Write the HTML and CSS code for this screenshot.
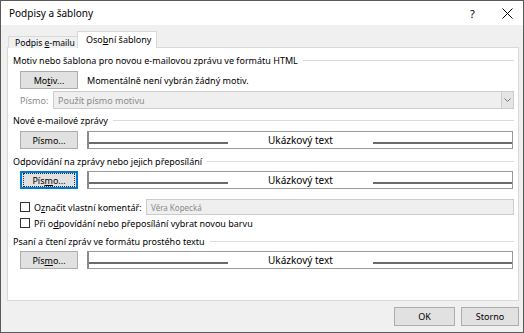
FILE: index.html
```html
<!DOCTYPE html>
<html lang="cs">
<head>
  <meta charset="UTF-8" />
  <title>Podpisy a šablony</title>
  <link rel="stylesheet" href="styles.css">
</head>
<body>

<div class="dialog">
  <div class="titlebar">
    <span class="title">Podpisy a šablony</span>
    <span class="help">?</span>
    <span class="close">
      <svg width="11" height="11" viewBox="0 0 11 11"><path d="M0.5 0.5 L10.5 10.5 M10.5 0.5 L0.5 10.5" stroke="#000" stroke-width="1" fill="none"/></svg>
    </span>
  </div>

  <div class="client">
    <div class="tabs">
      <div class="tab">Podpis <u>e</u>-mailu</div>
      <div class="tab selected">Oso<u>b</u>ní šablony</div>
    </div>

    <div class="panel">
      <!-- HTML motiv -->
      <div class="group-title g1"><span>Motiv nebo šablona pro novou e-mailovou zprávu ve formátu HTML</span></div>
      <div class="row theme-row">
        <button class="btn">Mo<u>t</u>iv...</button>
        <span class="note">Momentálně není vybrán žádný motiv.</span>
      </div>
      <div class="row select-row">
        <span class="label-off">Písmo:</span>
        <div class="select">
          <span>Použít písmo motivu</span>
          <span class="drop">
            <svg width="7" height="4" viewBox="0 0 7 4"><path d="M0.5 0.5 L3.5 3.5 L6.5 0.5" stroke="#777" stroke-width="1" fill="none"/></svg>
          </span>
        </div>
      </div>

      <!-- Nové zprávy -->
      <div class="group-title g2"><span>Nové e-mailové zprávy</span></div>
      <div class="row font-row f2">
        <button class="btn">Písmo...</button>
        <div class="sample"><span class="rule"></span><span class="sample-text">Ukázkový text</span><span class="rule"></span></div>
      </div>

      <!-- Odpovídání -->
      <div class="group-title g3"><span>Odpovídání na zprávy nebo jejich přeposílání</span></div>
      <div class="row font-row f3">
        <button class="btn focused"><span class="focus-rect">Pís<u>m</u>o...</span></button>
        <div class="sample"><span class="rule"></span><span class="sample-text">Ukázkový text</span><span class="rule"></span></div>
      </div>
      <div class="row check-row c1">
        <span class="check"></span>
        <span class="check-label">O<u>z</u>načit vlastní komentář:</span>
        <div class="comment">Věra Kopecká</div>
      </div>
      <div class="row check-row c2">
        <span class="check"></span>
        <span>Při o<u>d</u>povídání nebo přeposílání vybrat novou barvu</span>
      </div>

      <!-- Prostý text -->
      <div class="group-title g4"><span>Psaní a čtení zpráv ve formátu prostého textu</span></div>
      <div class="row font-row f4">
        <button class="btn">Pís<u>m</u>o...</button>
        <div class="sample"><span class="rule"></span><span class="sample-text">Ukázkový text</span><span class="rule"></span></div>
      </div>
    </div>

    <div class="footer">
      <button class="btn ok">OK</button>
      <button class="btn cancel">Storno</button>
    </div>
  </div>
</div>

</body>
</html>
```

FILE: styles.css
```css
:root {
  --face: #f0f0f0;
  --edge: #d9d9d9;
  --btn-face: #e1e1e1;
  --btn-edge: #adadad;
  --muted: #8a8a8a;
}

body {
  margin: 0;
  font-family: "Segoe UI", "Noto Sans", sans-serif;
  font-size: 9px;
  color: #000;
  white-space: nowrap;
}

.dialog {
  width: 524px;
  height: 333px;
  box-sizing: border-box;
  border: 1px solid #5a5a5a;
  background-color: var(--face);
  display: flex;
  flex-direction: column;
}

.titlebar {
  height: 24px;
  background-color: #fff;
  display: flex;
  align-items: center;
  padding-left: 8px;
}

.title {
  flex: 1;
  font-size: 10px;
}

.help {
  width: 32px;
  font-size: 11px;
}

.close {
  width: 21px;
  display: flex;
}

.client {
  flex: 1;
  padding: 6px 4px 0 6px;
  display: flex;
  flex-direction: column;
}

/* tabs */
.tabs {
  display: flex;
  align-items: flex-end;
  height: 17px;
  padding-left: 1px;
  position: relative;
  z-index: 1;
}

.tab {
  height: 12px;
  width: 70px;
  box-sizing: border-box;
  padding-left: 6px;
  border: 1px solid var(--edge);
  border-bottom: none;
  background-color: var(--face);
  font-size: 8.6px;
  line-height: 12px;
}

.tab.selected {
  height: 17px;
  width: 80px;
  padding-left: 8px;
  background-color: #fff;
  margin-left: -1px;
  font-size: 9px;
  line-height: 15px;
}

/* panel */
.panel {
  height: 252px;
  margin-top: -1px;
  background-color: #fff;
  border: 1px solid var(--edge);
  padding: 0 4px 0 5px;
  display: flex;
  flex-direction: column;
}

.group-title {
  height: 14px;
  display: flex;
  align-items: center;
  gap: 5px;
}

.group-title::after {
  content: "";
  flex: 1;
  height: 1px;
  background-color: #dcdcdc;
}

.g1 { margin-top: 5px; }
.g2 { margin-top: 4px; }
.g3 { margin-top: 5px; }
.g4 { margin-top: 4px; }

.row {
  display: flex;
  align-items: center;
  padding-left: 7px;
}

.theme-row { height: 18px; margin-top: 4px; }
.select-row { height: 18px; margin-top: 2px; }
.f2 { height: 18px; margin-top: 4px; }
.f3 { height: 18px; margin-top: 3px; }
.c1 { height: 16px; margin-top: 10px; }
.c2 { height: 14px; margin-top: 1px; }
.f4 { height: 18px; margin-top: 3px; }

.btn {
  width: 58px;
  height: 18px;
  box-sizing: border-box;
  border: 1px solid var(--btn-edge);
  background-color: var(--btn-face);
  font-family: inherit;
  font-size: 9px;
  color: #000;
  padding: 0;
  display: flex;
  align-items: center;
  justify-content: center;
}

.btn.focused {
  border: 2px solid #0078d7;
}

.focus-rect {
  display: flex;
  align-items: center;
  justify-content: center;
  width: 50px;
  height: 12px;
  border: 1px dotted #333;
}

.note {
  margin-left: 9px;
}

.label-off {
  width: 33px;
  color: var(--muted);
}

.select {
  flex: 1;
  height: 18px;
  box-sizing: border-box;
  border: 1px solid #cccccc;
  background-color: #efefef;
  color: var(--muted);
  display: flex;
  align-items: center;
  padding-left: 4px;
}

.select span:first-child {
  flex: 1;
}

.drop {
  width: 12px;
  height: 16px;
  box-sizing: border-box;
  border-left: 1px solid #cccccc;
  background-color: #e5e5e5;
  display: flex;
  align-items: center;
  justify-content: center;
}

/* font preview */
.sample {
  flex: 1;
  margin-left: 9px;
  margin-right: 1px;
  height: 18px;
  box-sizing: border-box;
  border: 1px solid #9a9a9a;
  border-left: 2px solid #8a8a8a;
  display: flex;
  align-items: center;
}

.rule {
  flex: 1;
  height: 2px;
  margin-top: 5px;
  background-color: #6a6a6a;
}

.sample-text {
  margin: 0 40px;
  font-size: 10px;
}

/* checkboxes */
.check {
  width: 10px;
  height: 10px;
  box-sizing: border-box;
  border: 1px solid #333;
  background-color: #fff;
  margin-right: 4px;
}

.check-label {
  width: 112px;
}

.comment {
  flex: 1;
  height: 16px;
  box-sizing: border-box;
  border: 1px solid #cccccc;
  background-color: #efefef;
  color: var(--muted);
  font-size: 8px;
  display: flex;
  align-items: center;
  padding-left: 4px;
}

/* footer */
.footer {
  display: flex;
  justify-content: flex-end;
  gap: 6px;
  padding-top: 6px;
}

.footer .ok { width: 61px; height: 19px; }
.footer .cancel { width: 58px; height: 19px; }
```
